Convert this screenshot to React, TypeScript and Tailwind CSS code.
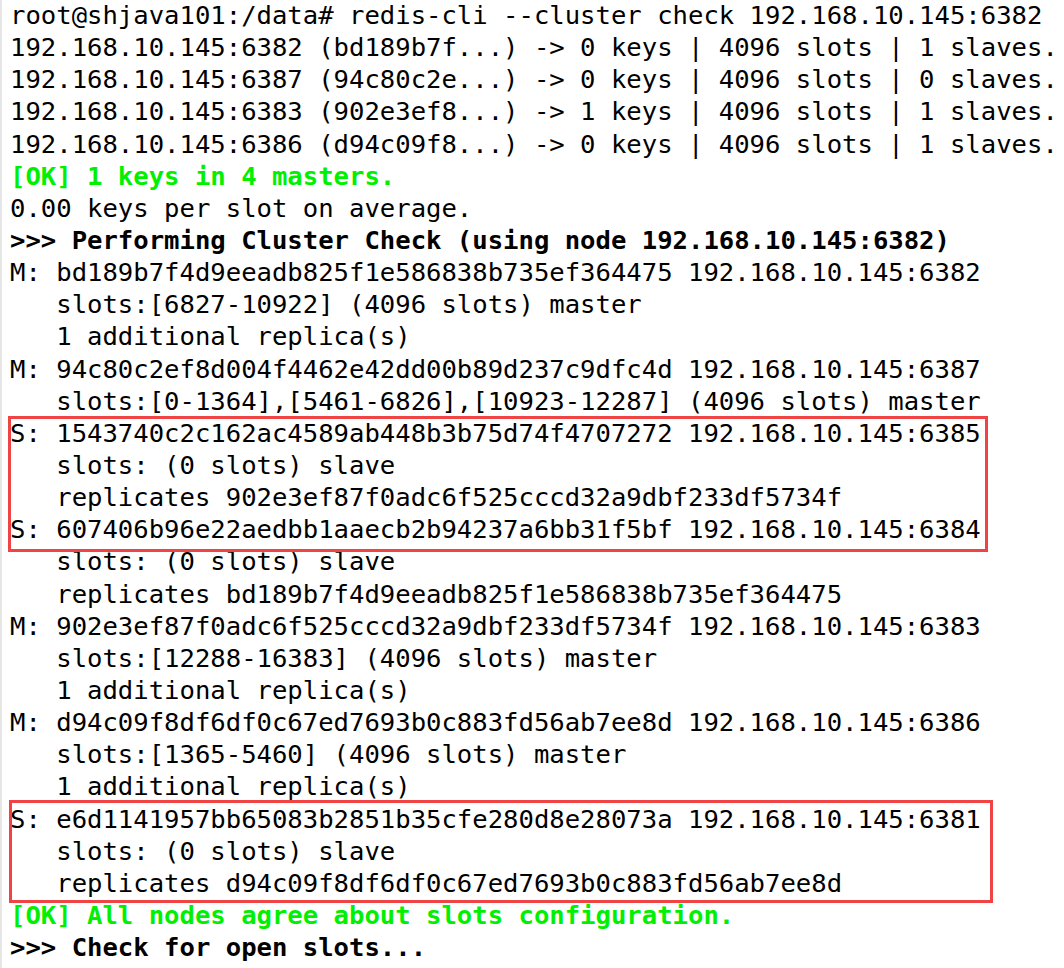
import React from "react"

type Line = { text: string; kind?: "ok" | "bold" }

const lines: Line[] = [
  { text: "root@shjava101:/data# redis-cli --cluster check 192.168.10.145:6382" },
  { text: "192.168.10.145:6382 (bd189b7f...) -> 0 keys | 4096 slots | 1 slaves." },
  { text: "192.168.10.145:6387 (94c80c2e...) -> 0 keys | 4096 slots | 0 slaves." },
  { text: "192.168.10.145:6383 (902e3ef8...) -> 1 keys | 4096 slots | 1 slaves." },
  { text: "192.168.10.145:6386 (d94c09f8...) -> 0 keys | 4096 slots | 1 slaves." },
  { text: "[OK] 1 keys in 4 masters.", kind: "ok" },
  { text: "0.00 keys per slot on average." },
  { text: ">>> Performing Cluster Check (using node 192.168.10.145:6382)", kind: "bold" },
  { text: "M: bd189b7f4d9eeadb825f1e586838b735ef364475 192.168.10.145:6382" },
  { text: "   slots:[6827-10922] (4096 slots) master" },
  { text: "   1 additional replica(s)" },
  { text: "M: 94c80c2ef8d004f4462e42dd00b89d237c9dfc4d 192.168.10.145:6387" },
  { text: "   slots:[0-1364],[5461-6826],[10923-12287] (4096 slots) master" },
  { text: "S: 1543740c2c162ac4589ab448b3b75d74f4707272 192.168.10.145:6385" },
  { text: "   slots: (0 slots) slave" },
  { text: "   replicates 902e3ef87f0adc6f525cccd32a9dbf233df5734f" },
  { text: "S: 607406b96e22aedbb1aaecb2b94237a6bb31f5bf 192.168.10.145:6384" },
  { text: "   slots: (0 slots) slave" },
  { text: "   replicates bd189b7f4d9eeadb825f1e586838b735ef364475" },
  { text: "M: 902e3ef87f0adc6f525cccd32a9dbf233df5734f 192.168.10.145:6383" },
  { text: "   slots:[12288-16383] (4096 slots) master" },
  { text: "   1 additional replica(s)" },
  { text: "M: d94c09f8df6df0c67ed7693b0c883fd56ab7ee8d 192.168.10.145:6386" },
  { text: "   slots:[1365-5460] (4096 slots) master" },
  { text: "   1 additional replica(s)" },
  { text: "S: e6d1141957bb65083b2851b35cfe280d8e28073a 192.168.10.145:6381" },
  { text: "   slots: (0 slots) slave" },
  { text: "   replicates d94c09f8df6df0c67ed7693b0c883fd56ab7ee8d" },
  { text: "[OK] All nodes agree about slots configuration.", kind: "ok" },
  { text: ">>> Check for open slots...", kind: "bold" },
]

export default function App() {
  return (
    <div className="w-[1064px] h-[968px] overflow-hidden bg-white border-l-2 border-[#e6e6e6]">
      <div className="relative pl-[8px] -mt-[1px] font-['DejaVu_Sans_Mono',monospace] text-[25.6px] leading-[32.14px] text-black">
        {lines.map((line, i) => (
          <div
            key={i}
            className={`whitespace-pre ${
              line.kind === "ok" ? "text-[#00f000] font-bold" : line.kind === "bold" ? "font-bold" : ""
            }`}
          >
            {line.text}
          </div>
        ))}

        {/* red annotation boxes */}
        <div className="absolute left-[6px] top-[417px] w-[980px] h-[136px] border-[3px] border-[#f04444]" />
        <div className="absolute left-[7px] top-[801px] w-[984px] h-[103px] border-[3px] border-[#f04444]" />
      </div>
    </div>
  )
}
